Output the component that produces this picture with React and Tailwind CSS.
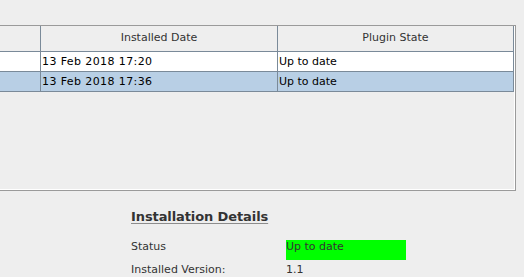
const rows = [
  { date: '13 Feb 2018 17:20', state: 'Up to date', selected: false },
  { date: '13 Feb 2018 17:36', state: 'Up to date', selected: true },
];

export default function App() {
  return (
    <div className="w-[524px] h-[277px] overflow-hidden bg-[#eeeeee] pt-[25px] font-['DejaVu_Sans',sans-serif] text-[11px]">
      {/* Plugin table */}
      <div className="w-[516px] h-[166px] border-t border-r border-b border-[#9a9a9a]">
        <div className="h-full border-r border-b border-white">
          <div className="flex h-[26px] border-b border-[#7a8a99] text-[#333333]">
            <div className="w-[41px] border-r border-[#7a8a99]"></div>
            <div className="w-[237px] border-r border-[#7a8a99] flex items-center justify-center">Installed Date</div>
            <div className="w-[236px] border-r border-[#7a8a99] flex items-center justify-center">Plugin State</div>
          </div>
          {rows.map((r, i) => (
            <div
              key={i}
              className={`flex h-[20px] border-b border-[#7a8a99] text-black leading-[19px] ${r.selected ? 'bg-[#b8cfe5]' : 'bg-white'}`}
            >
              <div className="w-[41px] border-r border-[#7a8a99]"></div>
              <div className="w-[237px] border-r border-[#7a8a99] pl-[1px] tracking-[0.4px]">{r.date}</div>
              <div className="w-[236px] border-r border-[#7a8a99] pl-[1px]">{r.state}</div>
            </div>
          ))}
        </div>
      </div>

      {/* Installation details */}
      <div className="pl-[131px] pt-[18px] text-[#333333]">
        <div className="h-[31px] leading-[16px] text-[13px] font-bold tracking-[-0.1px]">
          <span className="underline decoration-[#8c8c8c] underline-offset-[2px]">Installation Details</span>
        </div>
        <div className="grid grid-cols-[155px_120px] gap-y-[3px] leading-[13px]">
          <div className="h-[20px]">Status</div>
          <div className="h-[20px] bg-[#00ff00]">Up to date</div>
          <div className="h-[14px]">Installed Version:</div>
          <div className="h-[14px]">1.1</div>
        </div>
      </div>
    </div>
  );
}
